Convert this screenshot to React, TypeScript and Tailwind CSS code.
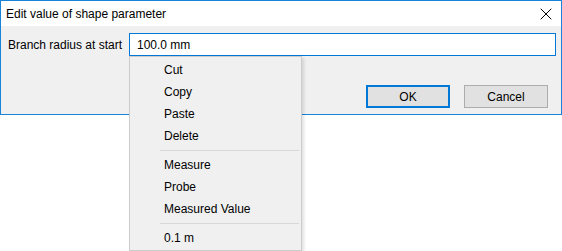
import { X } from "lucide-react";

const font = { fontFamily: '"Segoe UI", "Liberation Sans", Arial, sans-serif' };

type MenuEntry = { label: string } | { sep: true };

const menu: MenuEntry[] = [
  { label: "Cut" },
  { label: "Copy" },
  { label: "Paste" },
  { label: "Delete" },
  { sep: true },
  { label: "Measure" },
  { label: "Probe" },
  { label: "Measured Value" },
  { sep: true },
  { label: "0.1 m" },
];

function ContextMenu() {
  return (
    <div className="absolute left-[129px] top-[56px] w-[173px] h-[195px] bg-[#f0f0f0] border border-[#cccccc] py-[2px] shadow-[2px_2px_3px_rgba(0,0,0,0.12)]">
      {menu.map((item, i) =>
        "sep" in item ? (
          <div key={i} className="h-[7px] flex items-center pl-[30px] pr-[2px]">
            <div className="h-px w-full bg-[#d7d7d7]" />
          </div>
        ) : (
          <div
            key={i}
            className="h-[22px] flex items-center pl-[34px] text-[12px] text-black"
          >
            {item.label}
          </div>
        )
      )}
    </div>
  );
}

export default function App() {
  return (
    <div className="relative w-[562px] h-[251px] bg-white text-[12px] text-black" style={font}>
      <div className="w-full h-[115px] border border-[#1883d7] flex flex-col">
        <div className="h-[25px] bg-white flex items-center justify-between pl-[5px] pr-[5px]">
          <span>Edit value of shape parameter</span>
          <X className="w-[20px] h-[20px] text-black" strokeWidth={1.2} />
        </div>
        <div className="flex-1 bg-[#f0f0f0] flex flex-col">
          <div className="flex items-center mt-[7px] pl-[7px]">
            <span className="w-[121px]">Branch radius at start</span>
            <div className="w-[427px] h-[23px] bg-white border border-[#0078d7] flex items-center pl-[7px]">
              100.0 mm
            </div>
          </div>
          <div className="flex justify-end gap-[14px] mt-[29px] pr-[13px]">
            <button className="w-[84px] h-[23px] bg-[#e1e1e1] border-2 border-[#0078d7]">
              OK
            </button>
            <button className="w-[84px] h-[23px] bg-[#e1e1e1] border border-[#adadad]">
              Cancel
            </button>
          </div>
        </div>
      </div>
      <ContextMenu />
    </div>
  );
}
